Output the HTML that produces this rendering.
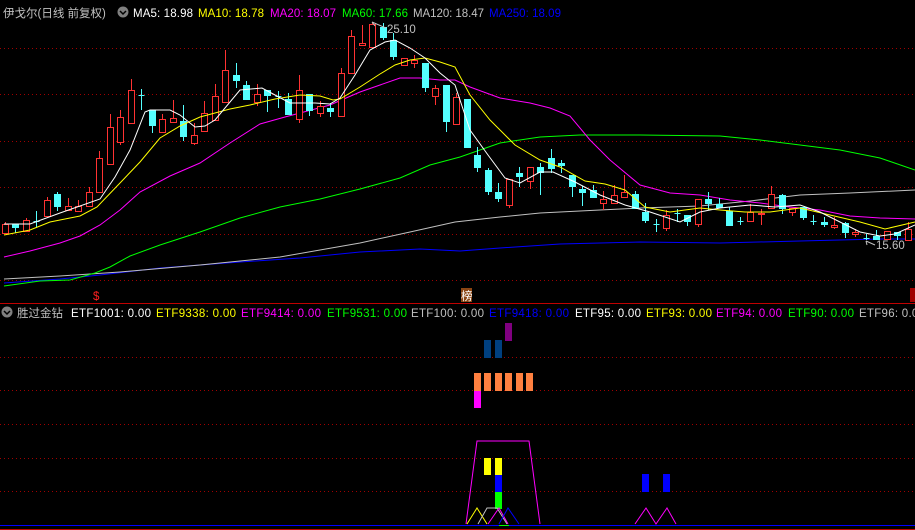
<!DOCTYPE html>
<html><head><meta charset="utf-8"><style>
html,body{margin:0;padding:0;background:#000;width:915px;height:530px;overflow:hidden}
svg{display:block}
text{font-family:"Liberation Sans","Noto Sans CJK SC",sans-serif;font-size:11.5px}
</style></head><body>
<svg id="s" width="915" height="530" viewBox="0 0 915 530" xmlns="http://www.w3.org/2000/svg">
<rect width="915" height="530" fill="#000"/>
<g stroke="#a00000" stroke-dasharray="1,3" stroke-width="1">
<line x1="0" y1="48.5" x2="915" y2="48.5"/><line x1="0" y1="94.5" x2="915" y2="94.5"/>
<line x1="0" y1="141.5" x2="915" y2="141.5"/><line x1="0" y1="187.5" x2="915" y2="187.5"/>
<line x1="0" y1="234.5" x2="915" y2="234.5"/><line x1="0" y1="280.5" x2="915" y2="280.5"/>
<line x1="0" y1="357.5" x2="915" y2="357.5"/><line x1="0" y1="390.5" x2="915" y2="390.5"/>
<line x1="0" y1="424.5" x2="915" y2="424.5"/><line x1="0" y1="458.5" x2="915" y2="458.5"/>
<line x1="0" y1="491.5" x2="915" y2="491.5"/>
</g>
<g fill="none" stroke-width="1">
<polyline stroke="#0000ff" points="4,283 60,279 100,275 160,268 240,262 300,258 360,252 420,249 460,251 500,248 560,244 640,242 720,243 800,241 880,239 915,239"/>
<polyline stroke="#c0c0c0" points="4,279 60,276 120,272 200,265 280,257 360,243 410,232 455,222 500,217 540,213 600,210 640,208 700,206 750,201 800,195 850,193 915,190"/>
<polyline stroke="#00ff00" points="4,286 40,281 70,280 95,273 110,267 130,256 160,245 200,232 240,218 280,207 320,199 360,189 400,178 430,165 460,157 500,143 540,137 580,135 640,135 720,136 760,140 800,145 840,150 880,158 915,170"/>
<polyline stroke="#ff00ff" points="4,257 30,251 60,243 80,236 100,225 120,210 140,192 170,176 200,163 230,143 260,124 285,117 300,113 330,105 360,92 400,78 420,78 440,80 455,80 470,87 500,98 530,103 550,108 570,116 590,140 610,160 640,185 670,193 700,195 730,200 760,203 790,207 820,210 850,216 880,218 915,219"/>
</g>
<g id="c"></g>
<g fill="none" stroke-width="1">
<polyline stroke="#ffff00" points="4,235 30,230 50,222 70,218 80,216 97,207 120,183 140,162 160,138 180,126 200,117 230,109 250,105 275,99 300,95 320,96 333,100 340,99 360,87 380,74 395,65 410,60 425,58 440,62 455,67 470,95 490,120 515,145 540,160 560,167 585,181 605,184 625,190 645,207 670,212 700,208 720,210 745,212 770,212 800,208 830,215 860,222 885,229 915,222"/>
<polyline stroke="#ffffff" points="4,224 30,224 60,213 100,199 115,177 130,150 145,112 150,110 170,110 180,115 195,127 205,126 215,120 240,90 262,88 275,95 290,103 315,103 330,104 340,98 355,75 370,50 385,42 395,40 410,48 425,58 440,73 455,85 470,130 488,155 505,178 520,183 540,172 553,172 575,182 600,195 625,205 650,212 680,222 700,212 720,208 750,205 775,207 800,205 820,212 840,222 860,232 880,236 895,234 915,225"/>
</g>
<path d="M372,22 l14,6 M372,22 l3,4" stroke="#c0c0c0" fill="none"/>
<text x="387" y="33" fill="#c0c0c0" font-size="12">25.10</text>
<path d="M866,241 l9,4 M866,241 l1,4" stroke="#c0c0c0" fill="none"/>
<text x="876" y="249" fill="#c0c0c0" font-size="12">15.60</text>
<text x="93" y="300" fill="#ff2020" font-size="11">$</text>
<rect x="461" y="288" width="11" height="14" fill="#8b4513"/><text x="461" y="300" fill="#fff" font-size="11">榜</text>
<rect x="910" y="288" width="5" height="14" fill="#a00000"/>
<text x="3" y="17" fill="#c0c0c0" font-size="13">伊戈尔(日线 前复权)</text>
<circle cx="123" cy="12" r="5.5" fill="#808080"/><path d="M120,11 l3,3 l3,-3" stroke="#000" fill="none" stroke-width="1.5"/>
<text x="133" y="17" fill="#fff" textLength="60">MA5: 18.98</text>
<text x="198" y="17" fill="#ff0" textLength="66">MA10: 18.78</text>
<text x="270" y="17" fill="#f0f" textLength="66">MA20: 18.07</text>
<text x="342" y="17" fill="#0f0" textLength="66">MA60: 17.66</text>
<text x="413" y="17" fill="#c0c0c0" textLength="71">MA120: 18.47</text>
<text x="489" y="17" fill="#00f" textLength="72">MA250: 18.09</text>
<line x1="0" y1="303.5" x2="915" y2="303.5" stroke="#c00000"/>
<circle cx="7" cy="312" r="5.5" fill="#808080"/><path d="M4,311 l3,3 l3,-3" stroke="#000" fill="none" stroke-width="1.5"/>
<text x="17" y="317" fill="#c0c0c0" font-size="13">胜过金钻</text>
<text x="71" y="317" fill="#fff" textLength="80">ETF1001: 0.00</text>
<text x="156" y="317" fill="#ff0" textLength="80">ETF9338: 0.00</text>
<text x="241" y="317" fill="#f0f" textLength="80">ETF9414: 0.00</text>
<text x="327" y="317" fill="#0f0" textLength="80">ETF9531: 0.00</text>
<text x="411" y="317" fill="#c0c0c0" textLength="73">ETF100: 0.00</text>
<text x="489" y="317" fill="#00f" textLength="80">ETF9418: 0.00</text>
<text x="575" y="317" fill="#fff" textLength="66">ETF95: 0.00</text>
<text x="646" y="317" fill="#ff0" textLength="66">ETF93: 0.00</text>
<text x="716" y="317" fill="#f0f" textLength="66">ETF94: 0.00</text>
<text x="788" y="317" fill="#0f0" textLength="66">ETF90: 0.00</text>
<text x="859" y="317" fill="#c0c0c0" textLength="66">ETF96: 0.00</text>
<rect x="505" y="323" width="7" height="18" fill="#800080"/>
<rect x="484" y="340" width="7" height="18" fill="#004080"/><rect x="495" y="340" width="7" height="18" fill="#004080"/>
<g fill="#ff8040"><rect x="474" y="373" width="7" height="18"/><rect x="484" y="373" width="7" height="18"/><rect x="495" y="373" width="7" height="18"/><rect x="505" y="373" width="7" height="18"/><rect x="516" y="373" width="7" height="18"/><rect x="526" y="373" width="7" height="18"/></g>
<rect x="474" y="391" width="7" height="17" fill="#f0f"/>
<polyline points="466,524 477,441 529,441 540,524" fill="none" stroke="#f0f"/>
<rect x="484" y="458" width="7" height="17" fill="#ff0"/><rect x="495" y="458" width="7" height="17" fill="#ff0"/>
<rect x="495" y="475" width="7" height="17" fill="#00f"/><rect x="495" y="492" width="7" height="17" fill="#0f0"/>
<polyline points="467,524 477,508 487,524" fill="none" stroke="#ff0"/>
<polyline points="478,524 487,508 497,508 507,524" fill="none" stroke="#c0c0c0"/>
<polyline points="488,524 499,508 508,524" fill="none" stroke="#f0f"/>
<polyline points="499,524 508,508 519,524" fill="none" stroke="#00f"/>
<rect x="642" y="474" width="7" height="18" fill="#00f"/><rect x="663" y="474" width="7" height="18" fill="#00f"/>
<polyline points="635,524 646,508 656,524 667,508 676,524" fill="none" stroke="#f0f"/>
<line x1="0" y1="525.5" x2="915" y2="525.5" stroke="#0000ff"/>
<line x1="499" y1="525.5" x2="509" y2="525.5" stroke="#0f0"/>
<line x1="0" y1="529.5" x2="915" y2="529.5" stroke="#c00000"/>
</svg>
<script>
var d=[["r",224,233,222,233],["c",224,228,224,233],["r",220,231,218,231],["x",221,221,211,228],["r",200,216,197,217],["c",194,207,192,211],["r",206,210,198,210],["r",206,211,200,212],["r",192,206,187,206],["r",158,192,151,192],["r",127,164,114,164],["r",117,142,110,145],["r",90,123,79,123],["x",95,95,89,110],["c",110,126,110,133],["r",119,132,114,132],["r",118,122,100,123],["c",121,137,105,141],["r",135,143,123,145],["r",113,131,101,131],["r",96,120,84,120],["r",70,102,50,102],["c",75,81,63,88],["c",85,100,81,100],["r",94,102,84,106],["c",90,96,90,112],["x",96,96,91,108],["c",99,115,93,115],["r",90,119,75,123],["c",94,111,94,116],["r",106,113,101,117],["c",108,112,103,117],["r",73,116,68,116],["r",36,73,30,73],["r",43,45,25,45],["r",24,47,22,47],["c",27,38,23,40],["c",40,57,33,60],["r",58,65,58,65],["r",60,63,55,68],["c",63,88,63,92],["r",88,96,85,105],["c",85,122,85,132],["r",97,124,93,124],["c",99,148,99,148],["c",155,168,147,172],["c",170,192,168,195],["c",192,199,183,202],["r",179,205,179,208],["c",173,177,167,187],["r",167,181,167,189],["c",167,173,163,195],["c",158,169,149,173],["c",163,166,160,173],["c",175,187,175,197],["c",189,193,186,206],["c",190,198,185,198],["r",199,203,191,210],["r",195,203,185,203],["r",192,197,175,197],["c",194,209,191,209],["c",212,221,203,223],["x",224,224,219,232],["r",215,228,210,231],["x",213,213,209,222],["c",215,222,215,226],["r",199,224,199,227],["c",199,204,192,210],["c",204,208,198,208],["c",211,226,207,226],["x",221,221,217,225],["r",212,221,204,221],["r",213,214,209,225],["r",194,208,186,208],["c",195,209,194,214],["r",208,212,208,216],["c",207,218,207,220],["x",221,221,215,225],["c",222,225,217,227],["r",225,227,217,229],["c",223,233,222,238],["r",232,234,229,237],["x",238,238,234,240],["c",236,240,230,240],["r",231,239,231,239],["c",232,236,232,240],["r",229,240,222,240]];
var g=document.getElementById("c"),h="";
for(var i=0;i<d.length;i++){var x=Math.round(4.5+10.5*i)+0.5,e=d[i];var col=e[0]=="r"?"#ff3232":"#54ffff";
h+='<line x1="'+x+'" y1="'+e[3]+'" x2="'+x+'" y2="'+e[4]+'" stroke="'+col+'"/>';
if(e[0]=="x"){h+='<line x1="'+(x-3)+'" y1="'+(e[1]+.5)+'" x2="'+(x+3)+'" y2="'+(e[1]+.5)+'" stroke="'+col+'"/>';}
else if(e[0]=="r"){h+='<rect x="'+(x-3)+'" y="'+(e[1]+.5)+'" width="6" height="'+Math.max(1,e[2]-e[1])+'" fill="#000" stroke="'+col+'"/>';}
else{h+='<rect x="'+(x-3.5)+'" y="'+e[1]+'" width="7" height="'+Math.max(1,e[2]-e[1])+'" fill="'+col+'"/>';}}
g.innerHTML=h;
</script>
</body></html>
